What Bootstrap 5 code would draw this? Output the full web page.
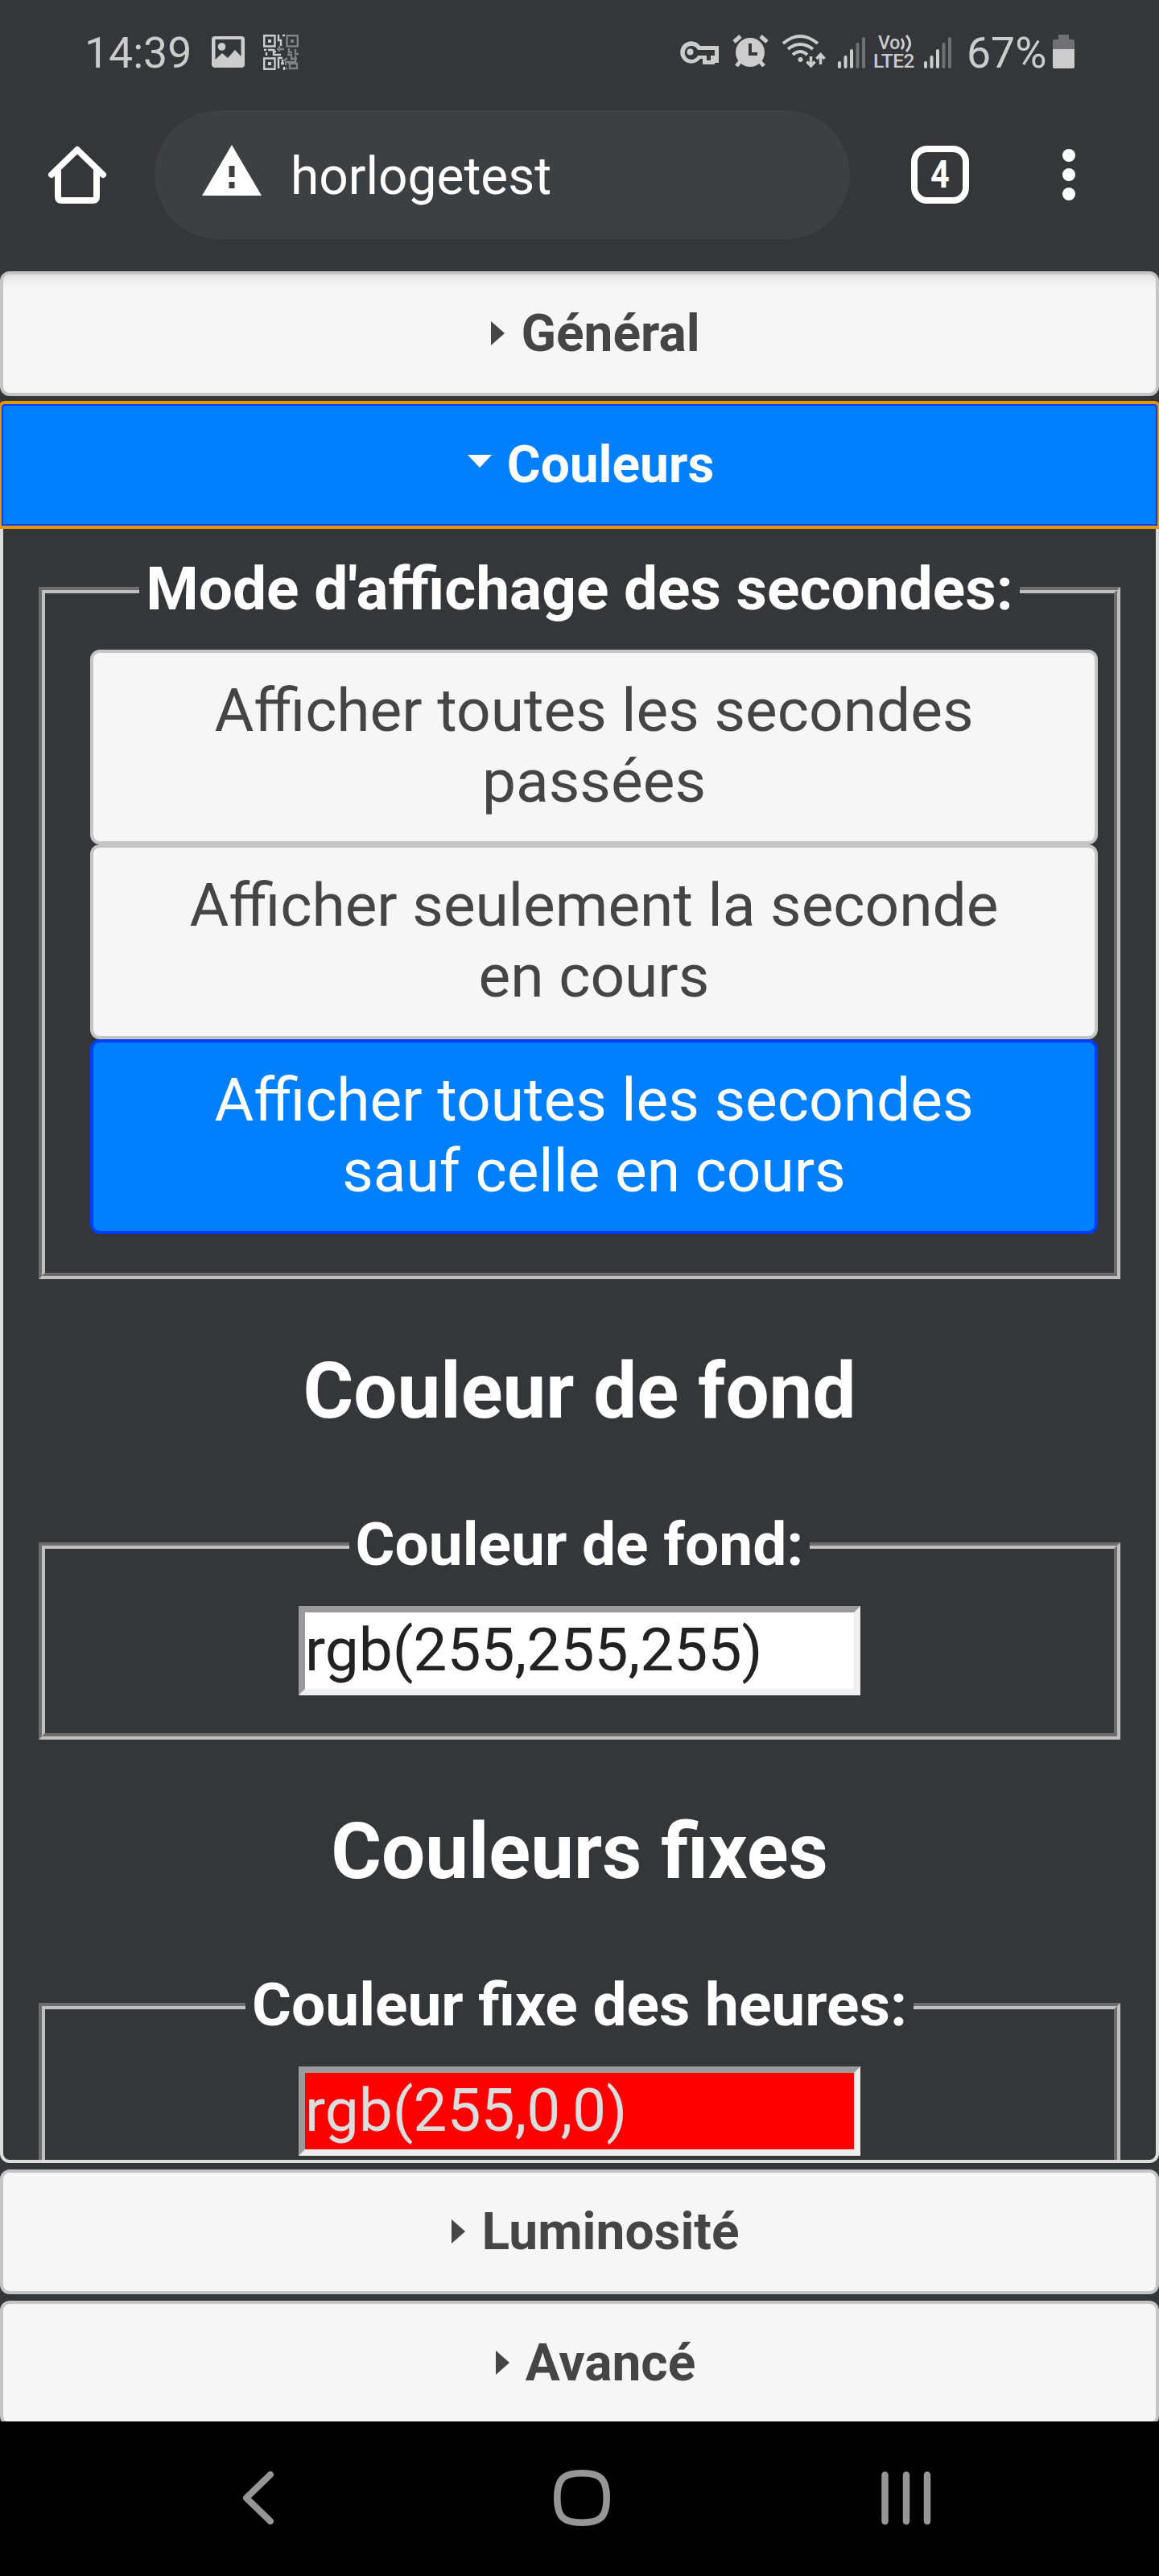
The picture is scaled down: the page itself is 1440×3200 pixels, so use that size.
<!DOCTYPE html>
<html lang="fr">
<head>
<meta charset="utf-8">
<meta name="viewport" content="width=device-width, initial-scale=1">
<title>horlogetest</title>
<link rel="stylesheet" href="https://cdn.jsdelivr.net/npm/bootstrap@5.3.0/dist/css/bootstrap.min.css">
<style>
  body { width: 1440px; height: 3200px; background: #35363a; font-family: Roboto, "Liberation Sans", sans-serif; overflow: hidden; }
  svg { display: block; flex: none; overflow: visible; }
  .status-bar { height: 137px; padding: 43px 105px 0 105px; color: #ccc; font-size: 53.5px; line-height: 46px; }
  .clock-text { width: 158px; }
  .battery-text { width: 107px; margin-left: 16px; }
  .volte { width: 54px; height: 44px; margin-left: 9px; font-weight: 500; }
  .volte-top { font-size: 23px; line-height: 22px; padding-left: 6px; }
  .volte-low { font-size: 24.5px; line-height: 22px; letter-spacing: -.5px; }
  .url-row { height: 200px; }
  .url-pill { width: 864px; height: 160px; margin-left: 60px; padding-left: 59px; border-radius: 80px; background: #3c4043; color: #fff; font-size: 64px; gap: 36px; }
  .url-text { padding-top: 6px; }
  .tab-count { width: 72px; height: 72px; margin-left: 76px; border: 8px solid #fff; border-radius: 20px; color: #fff; font-size: 48px; font-weight: 700; line-height: 1; }
  .tab-count span { transform: scaleX(.86); }
  .page-view { height: 2671px; }
  .acc-head { height: 155px; flex: none; border: 4px solid #c5c5c5; border-radius: 12px; background: #f6f6f6; color: #454545; font-size: 64px; font-weight: 700; line-height: 1; padding: 0 32px 0 45px; margin-bottom: 8px; }
  .acc-head.top-head { box-shadow: inset 0 16px 16px -12px rgba(0,0,0,.1); }
  .acc-head.active { background: #007fff; border-color: #003eff; color: #fff; outline: 4px solid #e59700; outline-offset: -2px; margin-bottom: 0; border-radius: 6px 6px 0 0; position: relative; z-index: 1; }
  .acc-panel { height: 2032px; flex: none; border: 4px solid #ddd; border-top: 0; border-radius: 0 0 12px 12px; padding: 34px 44px 0; margin-bottom: 8px; color: #fff; font-size: 74.88px; line-height: 88px; }
  .field-box { border: 8px groove #c0c0c0; }
  .field-box legend { float: none; width: auto; margin: 0 auto; padding: 0 8px 2px; font-size: 74.88px; font-weight: 700; line-height: 86px; }
  .choices { margin: 30px 20px 48px 56px; }
  .choice { height: 242px; border: 4px solid #c5c5c5; border-radius: 12px; background: #f6f6f6; color: #454545; padding: 28px 75px; text-align: center; line-height: 87.7px; }
  .choice.selected { background: #007fff; border-color: #003eff; color: #fff; }
  .group-title { height: 287px; padding-top: 83px; margin: 0; font-size: 96px; font-weight: 700; line-height: 112px; text-align: center; }
  .color-input { display: block; width: 698px; height: 111px; margin: 31px auto 47px; border: 8px inset #eee; border-radius: 0; padding: 0 0 3px; background: #fff; color: #222; font-size: 74.88px; line-height: 88px; }
  .color-input.red { background: #f00; color: #ddd; }
  .nav-keys { height: 192px; background: #000; padding: 60px 282px 0 300px; }
  .home-key { margin-left: 10px; }
</style>
</head>
<body class="d-flex flex-column">

<header>
  <div class="status-bar d-flex">
    <span class="clock-text">14:39</span>
    <svg width="42" height="44" viewBox="0 0 42 44"><path fill="#ccc" fill-rule="evenodd" d="M4 2H37Q41 2 41 6V37Q41 41 37 41H4Q0 41 0 37V6Q0 2 4 2ZM4.500 6V31L13 23L20 29L29 19L36.500 27V6Z"/><circle cx="12.500" cy="15" r="4.800" fill="#ccc"/></svg>
    <svg style="margin-left:22px" width="44" height="44" viewBox="0 0 44 44" fill="none" stroke="#ccc" stroke-width="2.400">
      <path d="M1.200 1.200H14.500V14.500H1.200ZM1.200 29.500H14.500V42.800H1.200Z"/>
      <path stroke="#808183" d="M29.500 1.200H42.800V14.500H29.500Z"/>
      <path fill="#ccc" stroke="none" d="M6 6h4v4H6zM6 34h4v4H6z"/><path fill="#808183" stroke="none" d="M34 6h4v4h-4z"/>
      <path d="M19 0V7H22V14M24 1H27M1 19H4M6 19H13V25H22M4 22V26M13 21H16M19 42V29H24M24 31V36M22 36H26M26 40V44"/>
      <path stroke="#808183" d="M20 14V21M17 18H26M32 17V22H36M40 18V24H44M30 25H35V30H42M40 26V34H28V38M31 36H42V42H33V37M26 32L30 29M28 42H30"/>
    </svg>
    <div class="d-flex ms-auto">
      <svg width="50" height="44" viewBox="845 43 50 44"><path fill="#ccc" fill-rule="evenodd" d="M870 57H893V78H888V80H873V73H870A13.700 13.700 0 1 1 870 57ZM867 62A8.500 8.500 0 1 0 867 69H878V75H883V69H888V62Z"/><circle cx="857.500" cy="64.500" r="4" fill="#ccc"/></svg>
      <svg style="margin-left:17px" width="44" height="44" viewBox="912 43 44 44"><g stroke="#ccc" stroke-width="5"><path d="M912 52L920 45M945 45L953 52M920 76L915 82M944 76L949 82"/></g><circle cx="932" cy="65" r="18" fill="#ccc"/><path d="M932 54V67H941" fill="none" stroke="#35363a" stroke-width="4"/></svg>
      <svg style="margin-left:15px" width="56" height="44" viewBox="970 43 56 44" fill="none" stroke="#ccc" stroke-width="4"><path d="M972 54Q993 36 1015 54M978 61Q993 49 1009 61M984 68Q993 60 1002 68"/><circle cx="993.500" cy="74" r="3" fill="#ccc" stroke="none"/><path stroke-width="3.500" d="M1006.500 70V82M1001.500 76.500L1006.500 82L1011.500 76.500M1018.500 80V68M1013.500 73L1018.500 67.500L1023.500 73"/></svg>
      <svg style="margin-left:13px" width="36" height="44" viewBox="0 0 36 44" stroke-width="4" stroke-linecap="round"><path stroke="#ccc" d="M3 35V40M10.500 28V40M18 20V40"/><path stroke="#707174" d="M25.500 12V40M33 5V40"/></svg>
      <div class="volte text-nowrap">
        <div class="volte-top d-flex">Vo<svg width="15" height="22" viewBox="0 0 15 22" fill="none" stroke="#ccc" stroke-width="3"><path d="M2 5Q7 12 2 18M8 1Q17 11 8 21"/></svg></div>
        <div class="volte-low">LTE2</div>
      </div>
      <svg style="margin-left:8px" width="38" height="44" viewBox="0 0 38 44" stroke-width="4" stroke-linecap="round"><path stroke="#ccc" d="M3 35V40M10.500 28V40M18 20V40"/><path stroke="#707174" d="M25.500 12V40M33 5V40"/></svg>
      <span class="battery-text">67%</span>
      <svg width="27" height="44" viewBox="0 0 27 44"><path fill="#707174" d="M7 0H20V6H25Q27 6 27 8V20H0V8Q0 6 2 6H7Z"/><path fill="#ccc" d="M0 18H27V40Q27 42 25 42H2Q0 42 0 40Z"/></svg>
    </div>
  </div>

  <div class="url-row d-flex align-items-start">
    <div class="d-flex align-items-center" style="height:160px;padding-left:60px">
      <svg width="72" height="72" viewBox="0 0 72 72" fill="none" stroke="#fff" stroke-width="8" stroke-linejoin="round" stroke-linecap="round"><path d="M4 36L36 5L68 36M12 32V63Q12 68 17 68H55Q60 68 60 63V32"/></svg>
      <div class="url-pill d-flex align-items-center">
        <svg style="margin-top:-10px" width="74" height="64" viewBox="0 0 74 64"><path fill="#fff" d="M37 0L74 63H0Z"/><path fill="#3c4043" d="M33.500 26h7v14h-7zM33.500 46h7v8h-7z"/></svg>
        <span class="url-text">horlogetest</span>
      </div>
      <div class="tab-count d-flex align-items-center justify-content-center"><span>4</span></div>
      <svg style="margin-left:116px" width="16" height="64" viewBox="0 0 16 64" fill="#fff"><circle cx="8" cy="8" r="8"/><circle cx="8" cy="32" r="8"/><circle cx="8" cy="56" r="8"/></svg>
    </div>
  </div>
</header>

<main class="page-view d-flex flex-column overflow-hidden">
  <div class="acc-head top-head d-flex align-items-center justify-content-center"><svg width="64" height="64" viewBox="0 0 64 64"><path fill="#454545" d="M27 16L44 31L27 46Z"/></svg>Général</div>

  <div class="acc-head active d-flex align-items-center justify-content-center"><svg width="64" height="64" viewBox="0 0 64 64"><path fill="#fff" d="M15 19H45L30 35Z"/></svg>Couleurs</div>
  <section class="acc-panel overflow-hidden">
    <fieldset class="field-box">
      <legend>Mode d'affichage des secondes:</legend>
      <div class="choices d-flex flex-column">
        <div class="choice">Afficher toutes les secondes passées</div>
        <div class="choice">Afficher seulement la seconde en cours</div>
        <div class="choice selected">Afficher toutes les secondes sauf celle en cours</div>
      </div>
    </fieldset>
    <h2 class="group-title">Couleur de fond</h2>
    <fieldset class="field-box">
      <legend>Couleur de fond:</legend>
      <input class="color-input" type="text" value="rgb(255,255,255)">
    </fieldset>
    <h2 class="group-title">Couleurs fixes</h2>
    <fieldset class="field-box">
      <legend>Couleur fixe des heures:</legend>
      <input class="color-input red" type="text" value="rgb(255,0,0)">
    </fieldset>
  </section>

  <div class="acc-head d-flex align-items-center justify-content-center"><svg width="64" height="64" viewBox="0 0 64 64"><path fill="#454545" d="M27 16L44 31L27 46Z"/></svg>Luminosité</div>
  <div class="acc-head d-flex align-items-center justify-content-center"><svg width="64" height="64" viewBox="0 0 64 64"><path fill="#454545" d="M27 16L44 31L27 46Z"/></svg>Avancé</div>
</main>

<footer class="nav-keys d-flex justify-content-between align-items-start">
  <svg width="42" height="70" viewBox="0 0 42 70" fill="none" stroke="#969696" stroke-width="8" stroke-linecap="round" stroke-linejoin="round"><path d="M36 6L6 35L36 64"/></svg>
  <svg class="home-key" width="70" height="70" viewBox="0 0 70 70" fill="none" stroke="#969696" stroke-width="8.500"><path d="M35 4.300C57 4.300 65.700 10 65.700 35S57 65.700 35 65.700S4.300 60 4.300 35S13 4.300 35 4.300Z"/></svg>
  <svg width="64" height="70" viewBox="0 0 64 70" fill="none" stroke="#969696" stroke-width="8.500" stroke-linecap="round"><path d="M5.500 6.500V64M32 6.500V64M58 6.500V64"/></svg>
</footer>

<script src="https://cdn.jsdelivr.net/npm/bootstrap@5.3.0/dist/js/bootstrap.bundle.min.js"></script>
</body>
</html>
